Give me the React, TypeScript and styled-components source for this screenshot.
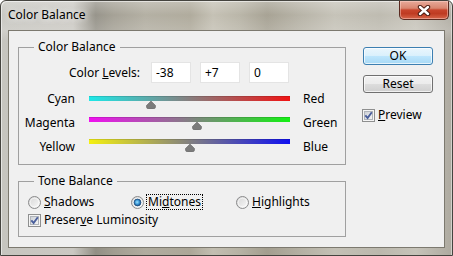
import React, { useId } from 'react';
import styled, { createGlobalStyle } from 'styled-components';

const Global = createGlobalStyle`
  html, body { margin: 0; padding: 0; background: #ffffff; }
  body { font-family: "Noto Sans", "Open Sans", sans-serif; font-size: 12px; }
`;

const Window = styled.div`
  width: 453px;
  height: 256px;
  box-sizing: border-box;
  display: flex;
  flex-direction: column;
  border: 1px solid #45443f;
  border-radius: 6px 6px 0 0;
  overflow: hidden;
  background:
    linear-gradient(to bottom, rgba(255, 255, 255, 0.28) 0px, rgba(255, 255, 255, 0.05) 14px, rgba(255, 255, 255, 0.18) 29px, rgba(255, 255, 255, 0) 40px),
    linear-gradient(to right, #c6c5bf 0%, #cac8c2 16%, #928f85 21%, #a19d91 25%, #b0ac9f 32%, #aca798 42%, #c2beb1 47%, #b6b2a4 53%, #a39e8f 59%, #b3afa2 66%, #c3c0b5 74%, #bbb8ad 84%, #c6c3b9 92%, #aeaaa0 100%);
  box-shadow: inset 1px 1px 0 rgba(255, 255, 255, 0.55), inset -1px 0 0 rgba(255, 255, 255, 0.45);
  font-family: "Noto Sans", "Open Sans", sans-serif;
  font-size: 12px;
  color: #000;
`;

const TitleBar = styled.div`
  height: 29px;
  flex: none;
  display: flex;
  align-items: flex-start;
  padding-left: 7px;
`;

const Title = styled.div`
  margin-top: 6px;
  line-height: 16px;
  font-size: 12px;
  text-shadow: 0 0 6px rgba(255, 255, 255, 0.9), 0 0 10px rgba(255, 255, 255, 0.6);
`;

const CloseButton = styled.div`
  margin-left: auto;
  margin-right: 3px;
  width: 50px;
  height: 19px;
  box-sizing: border-box;
  border: 1px solid #5b2a20;
  border-top: none;
  border-radius: 0 0 5px 5px;
  background: linear-gradient(to bottom, #e8aa9a 0%, #d98670 40%, #c8452c 50%, #bf3b22 70%, #d6664a 100%);
  box-shadow: inset 0 0 0 1px rgba(255, 220, 210, 0.45);
  display: flex;
  align-items: center;
  justify-content: center;
`;

const Client = styled.div`
  flex: 1;
  margin: 0 7px 7px;
  background: #f0f0f0;
  border: 1px solid #7c796f;
  display: flex;
  align-items: flex-start;
`;

const LeftColumn = styled.div`
  width: 337px;
  padding-left: 9px;
  box-sizing: border-box;
  flex: none;
`;

const Group = styled.fieldset<{ $top: number; $bottom: number }>`
  margin: ${(p) => p.$top}px 0 0;
  padding: 0 0 ${(p) => p.$bottom}px;
  width: 328px;
  box-sizing: border-box;
  border: 1px solid #a0a0a0;
  border-radius: 0;
  min-width: 0;
`;

const Legend = styled.legend`
  margin-left: 15px;
  padding: 0 4px;
  line-height: 14px;
  font-size: 12px;
`;

const LevelsRow = styled.div`
  margin-top: 8px;
  height: 21px;
  display: flex;
  align-items: center;
  gap: 9px;
`;

const LevelsLabel = styled.div`
  width: 121px;
  margin-right: 2px;
  text-align: right;
  line-height: 16px;
`;

const Field = styled.div`
  width: 40px;
  height: 21px;
  box-sizing: border-box;
  border: 1px solid #e4e4e4;
  background: #ffffff;
  padding-left: 4px;
  line-height: 19px;
`;

const Sliders = styled.div`
  margin-top: 8px;
`;

const SliderRow = styled.div`
  height: 24px;
  display: grid;
  grid-template-columns: 56px 215px auto;
  align-items: start;
`;

const SideLabel = styled.div<{ $align: 'left' | 'right' }>`
  line-height: 16px;
  text-align: ${(p) => p.$align};
  margin-left: ${(p) => (p.$align === 'left' ? '13px' : '0')};
`;

const TrackWrap = styled.div<{ $offset: number }>`
  position: relative;
  margin-left: 14px;
  margin-top: ${(p) => p.$offset}px;
  width: 201px;
  height: 5px;
`;

const Track = styled.div<{ $from: string; $to: string }>`
  height: 5px;
  background: linear-gradient(to right, ${(p) => p.$from}, ${(p) => p.$to});
  box-shadow: inset 0 1px 0 rgba(0, 0, 0, 0.12);
`;

const Thumb = styled.svg`
  position: absolute;
  top: 5px;
  width: 10px;
  height: 8px;
`;

const RadioRow = styled.div`
  margin-top: 6px;
  padding-left: 9px;
  display: grid;
  grid-template-columns: 103px 105px auto;
  height: 16px;
`;

const CheckRow = styled.div`
  margin-top: 2px;
  padding-left: 9px;
  height: 16px;
  display: flex;
`;

const Option = styled.div`
  display: flex;
  align-items: center;
  line-height: 16px;
  height: 16px;
`;

const OptionText = styled.span<{ $focused?: boolean }>`
  margin-left: ${(p) => (p.$focused ? '2px' : '3px')};
  padding: ${(p) => (p.$focused ? '0 1px' : '0')};
  line-height: 14px;
  border: ${(p) => (p.$focused ? '1px dotted #000' : 'none')};
`;

const RightColumn = styled.div`
  margin-left: 17px;
  width: 70px;
  display: flex;
  flex-direction: column;
`;

const Button = styled.div<{ $default?: boolean; $top: number }>`
  margin-top: ${(p) => p.$top}px;
  height: 18px;
  box-sizing: border-box;
  border-radius: 3px;
  border: 1px solid ${(p) => (p.$default ? '#3c7fb1' : '#707070')};
  background: ${(p) =>
    p.$default
      ? 'linear-gradient(to bottom, #eaf6fd 0%, #d9f0fc 50%, #bee6fd 50%, #a7d9f5 100%)'
      : 'linear-gradient(to bottom, #f2f2f2 0%, #ebebeb 50%, #dddddd 50%, #cfcfcf 100%)'};
  box-shadow: inset 0 0 0 1px rgba(255, 255, 255, 0.7);
  display: flex;
  align-items: center;
  justify-content: center;
  line-height: 16px;
`;

const PreviewRow = styled.div`
  margin-top: 14px;
  margin-left: -1px;
`;

const CloseGlyph = () => (
  <svg width="14" height="11" viewBox="0 0 14 11">
    <path d="M3 2 L11 9 M11 2 L3 9" stroke="#4a1c12" strokeWidth="4.4" strokeLinecap="round" />
    <path d="M3 2 L11 9 M11 2 L3 9" stroke="#ffffff" strokeWidth="2.4" strokeLinecap="round" />
  </svg>
);

const CheckBox = () => {
  const id = useId().replace(/:/g, '');
  return (
    <svg width="13" height="13" viewBox="0 0 13 13">
      <defs>
        <linearGradient id={`cb${id}`} x1="0" y1="0" x2="1" y2="1">
          <stop offset="0" stopColor="#cbcfd5" />
          <stop offset="1" stopColor="#f7f7f7" />
        </linearGradient>
      </defs>
      <rect x="0.5" y="0.5" width="12" height="12" fill="#f5f5f5" stroke="#8e8f8f" />
      <rect x="2.5" y="2.5" width="8" height="8" fill={`url(#cb${id})`} stroke="#b0b4ba" />
      <path d="M3.3 6.4 L5.6 9 L9.8 3.2" fill="none" stroke="#4a5f9c" strokeWidth="1.9" />
    </svg>
  );
};

const Radio = ({ checked }: { checked?: boolean }) => {
  const id = useId().replace(/:/g, '');
  return (
    <svg width="13" height="13" viewBox="0 0 13 13">
      <defs>
        <linearGradient id={`rb${id}`} x1="0" y1="0" x2="1" y2="1">
          <stop offset="0" stopColor="#d4d4d4" />
          <stop offset="1" stopColor="#fbfbfb" />
        </linearGradient>
        <radialGradient id={`rd${id}`} cx="0.45" cy="0.45" r="0.6">
          <stop offset="0" stopColor="#9fe3ff" />
          <stop offset="0.5" stopColor="#3d9ad8" />
          <stop offset="1" stopColor="#0d3f74" />
        </radialGradient>
      </defs>
      <circle cx="6.5" cy="6.5" r="6" fill={`url(#rb${id})`} stroke="#8a8b8c" />
      <circle cx="6.5" cy="6.5" r="4.3" fill="none" stroke="#ffffff" strokeOpacity="0.6" />
      {checked && <circle cx="6.5" cy="6.5" r="3.4" fill={`url(#rd${id})`} stroke="#1e4e80" strokeWidth="0.8" />}
    </svg>
  );
};

type SliderSpec = { left: string; right: string; from: string; to: string; value: number; offset: number };

const sliders: SliderSpec[] = [
  { left: 'Cyan', right: 'Red', from: '#1ee8e8', to: '#f01414', value: -38, offset: 5 },
  { left: 'Magenta', right: 'Green', from: '#f010f0', to: '#14f014', value: 7, offset: 2 },
  { left: 'Yellow', right: 'Blue', from: '#f4f010', to: '#1010f0', value: 0, offset: 0 },
];

const TRACK_W = 201;

const Slider = ({ s }: { s: SliderSpec }) => {
  const center = ((s.value + 100) / 200) * TRACK_W;
  return (
    <SliderRow>
      <SideLabel $align="right">{s.left}</SideLabel>
      <TrackWrap $offset={s.offset}>
        <Track $from={s.from} $to={s.to} />
        <Thumb viewBox="0 0 10 8" style={{ left: `${center - 5}px` }}>
          <path d="M5 0 L9.6 4.6 Q10 8 7 8 L3 8 Q0 8 0.4 4.6 Z" fill="#7b7b7b" stroke="#6a6a6a" strokeWidth="0.6" />
        </Thumb>
      </TrackWrap>
      <SideLabel $align="left">{s.right}</SideLabel>
    </SliderRow>
  );
};

export default function App() {
  return (
    <>
      <Global />
      <Window>
        <TitleBar>
          <Title>Color Balance</Title>
          <CloseButton>
            <CloseGlyph />
          </CloseButton>
        </TitleBar>
        <Client>
          <LeftColumn>
            <Group $top={9} $bottom={1}>
              <Legend>Color Balance</Legend>
              <LevelsRow>
                <LevelsLabel>
                  Color <u>L</u>evels:
                </LevelsLabel>
                <Field>-38</Field>
                <Field>+7</Field>
                <Field>0</Field>
              </LevelsRow>
              <Sliders>
                {sliders.map((s) => (
                  <Slider key={s.left} s={s} />
                ))}
              </Sliders>
            </Group>
            <Group $top={9} $bottom={8}>
              <Legend>Tone Balance</Legend>
              <RadioRow>
                <Option>
                  <Radio />
                  <OptionText>
                    <u>S</u>hadows
                  </OptionText>
                </Option>
                <Option>
                  <Radio checked />
                  <OptionText $focused>
                    Mi<u>d</u>tones
                  </OptionText>
                </Option>
                <Option>
                  <Radio />
                  <OptionText>
                    <u>H</u>ighlights
                  </OptionText>
                </Option>
              </RadioRow>
              <CheckRow>
                <Option>
                  <CheckBox />
                  <OptionText>
                    Preser<u>v</u>e Luminosity
                  </OptionText>
                </Option>
              </CheckRow>
            </Group>
          </LeftColumn>
          <RightColumn>
            <Button $default $top={16}>OK</Button>
            <Button $top={10}>Reset</Button>
            <PreviewRow>
              <Option>
                <CheckBox />
                <OptionText>
                  <u>P</u>review
                </OptionText>
              </Option>
            </PreviewRow>
          </RightColumn>
        </Client>
      </Window>
    </>
  );
}
